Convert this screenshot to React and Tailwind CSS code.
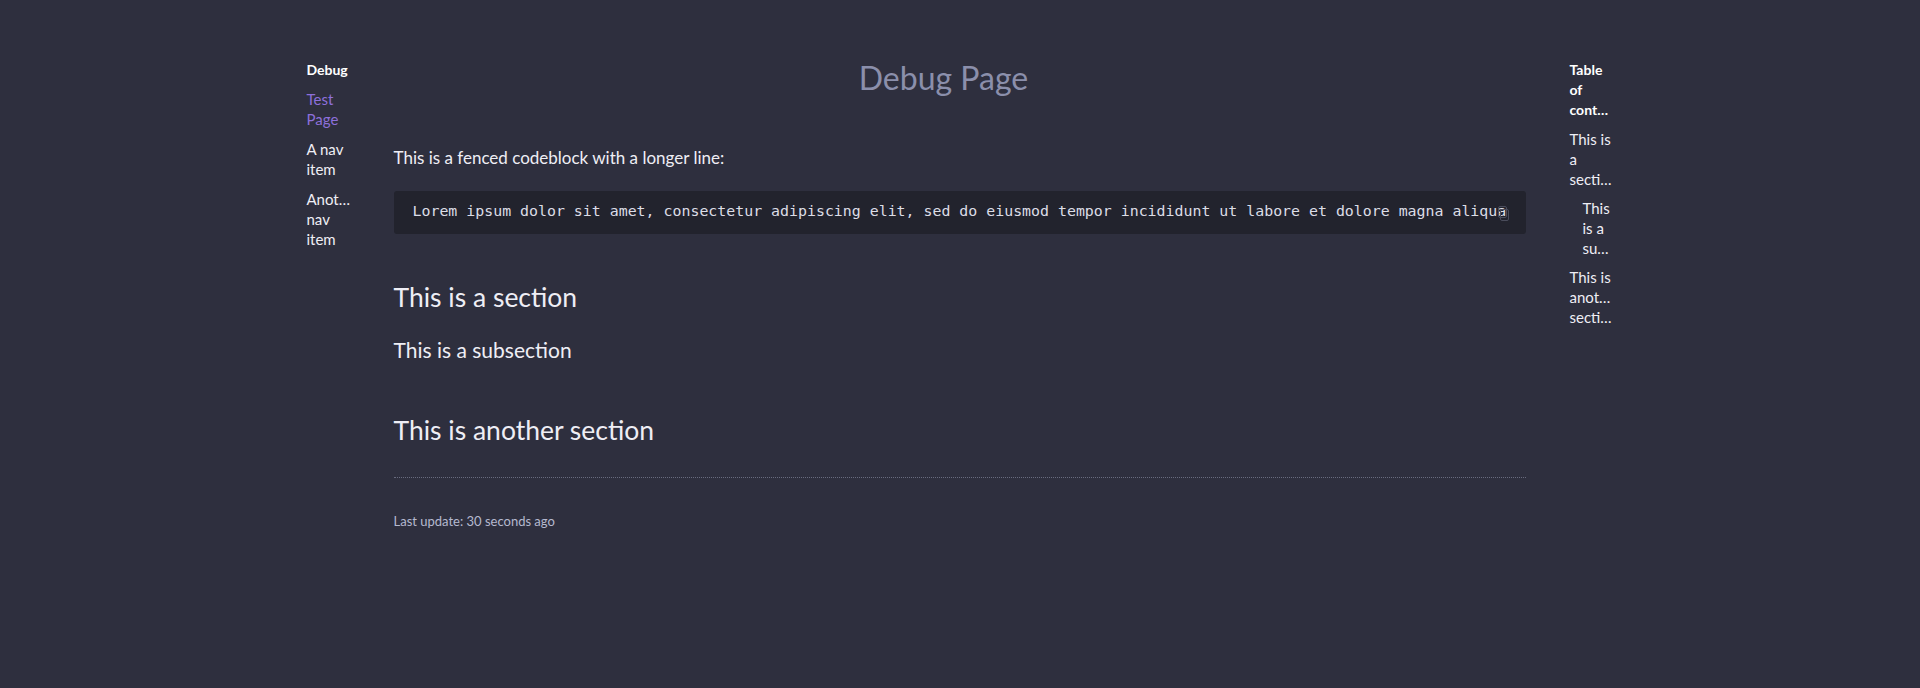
export default function App() {
  const navFont = { fontFamily: 'Lato, "Noto Sans", sans-serif' }
  return (
    <div className="min-h-[688px] bg-[#2e2f3e] text-[#eeeef5]" style={navFont}>
      <div className="mx-auto flex w-[1307px]">
        {/* Left nav */}
        <nav className="w-[44px] mr-[43px] pt-[60px] text-[15px] leading-[20px] shrink-0">
          <div className="text-[14px] font-bold text-white mb-[9px]">Debug</div>
          <div className="flex flex-col gap-[10px]">
            <a className="block text-[#8d6fdb]">
              <div>Test</div>
              <div>Page</div>
            </a>
            <a className="block">
              <div>A nav</div>
              <div>item</div>
            </a>
            <a className="block">
              <div>Anot…</div>
              <div>nav</div>
              <div>item</div>
            </a>
          </div>
        </nav>

        {/* Main content */}
        <main className="w-[1132px] shrink-0">
          <h1 className="pt-[58px] pr-[32px] text-center text-[32px] leading-[40px] text-[#8b8fab]">
            Debug Page
          </h1>
          <p className="mt-[48px] text-[17px] leading-[24px]">This is a fenced codeblock with a longer line:</p>
          <div className="relative mt-[21px] overflow-hidden rounded-[3px] bg-[#22232d] pl-[19px] pt-[9px] pb-[11px]">
            <pre
              className="text-[14.9px] leading-[23px] text-[#dcdde6]"
              style={{ fontFamily: '"DejaVu Sans Mono", "Liberation Mono", monospace' }}
            >
              Lorem ipsum dolor sit amet, consectetur adipiscing elit, sed do eiusmod tempor incididunt ut labore et dolore magna aliqua
            </pre>
            <svg
              className="absolute right-[17px] top-[15px]"
              width="11"
              height="15"
              viewBox="0 0 11 15"
              fill="none"
              stroke="#4a4c5b"
              strokeWidth="1"
            >
              <rect x="0.5" y="0.5" width="8" height="11" rx="1.5" />
              <rect x="2.5" y="3.5" width="8" height="11" rx="1.5" />
            </svg>
          </div>

          <h2 className="mt-[45px] text-[26.5px] leading-[36px]">This is a section</h2>
          <h3 className="mt-[20px] text-[21px] leading-[30px]">This is a subsection</h3>
          <h2 className="mt-[47px] text-[26.5px] leading-[36px]">This is another section</h2>

          <hr className="mt-[29px] border-0 border-t border-dotted border-[#686b7e]" />

          <div className="mt-[33px] text-[13px] leading-[20px] text-[#b5b9cf]">Last update: 30 seconds ago</div>
        </main>

        {/* Table of contents */}
        <aside className="ml-[44px] w-[48px] pt-[60px] text-[15px] leading-[20px] shrink-0">
          <div className="text-[14px] font-bold text-white">
            <div>Table</div>
            <div>of</div>
            <div>cont…</div>
          </div>
          <div className="mt-[9px] flex flex-col gap-[9px]">
            <a className="block">
              <div>This is</div>
              <div>a</div>
              <div>secti…</div>
            </a>
            <a className="block pl-[13px]">
              <div>This</div>
              <div>is a</div>
              <div>su…</div>
            </a>
            <a className="block">
              <div>This is</div>
              <div>anot…</div>
              <div>secti…</div>
            </a>
          </div>
        </aside>
      </div>
    </div>
  )
}
